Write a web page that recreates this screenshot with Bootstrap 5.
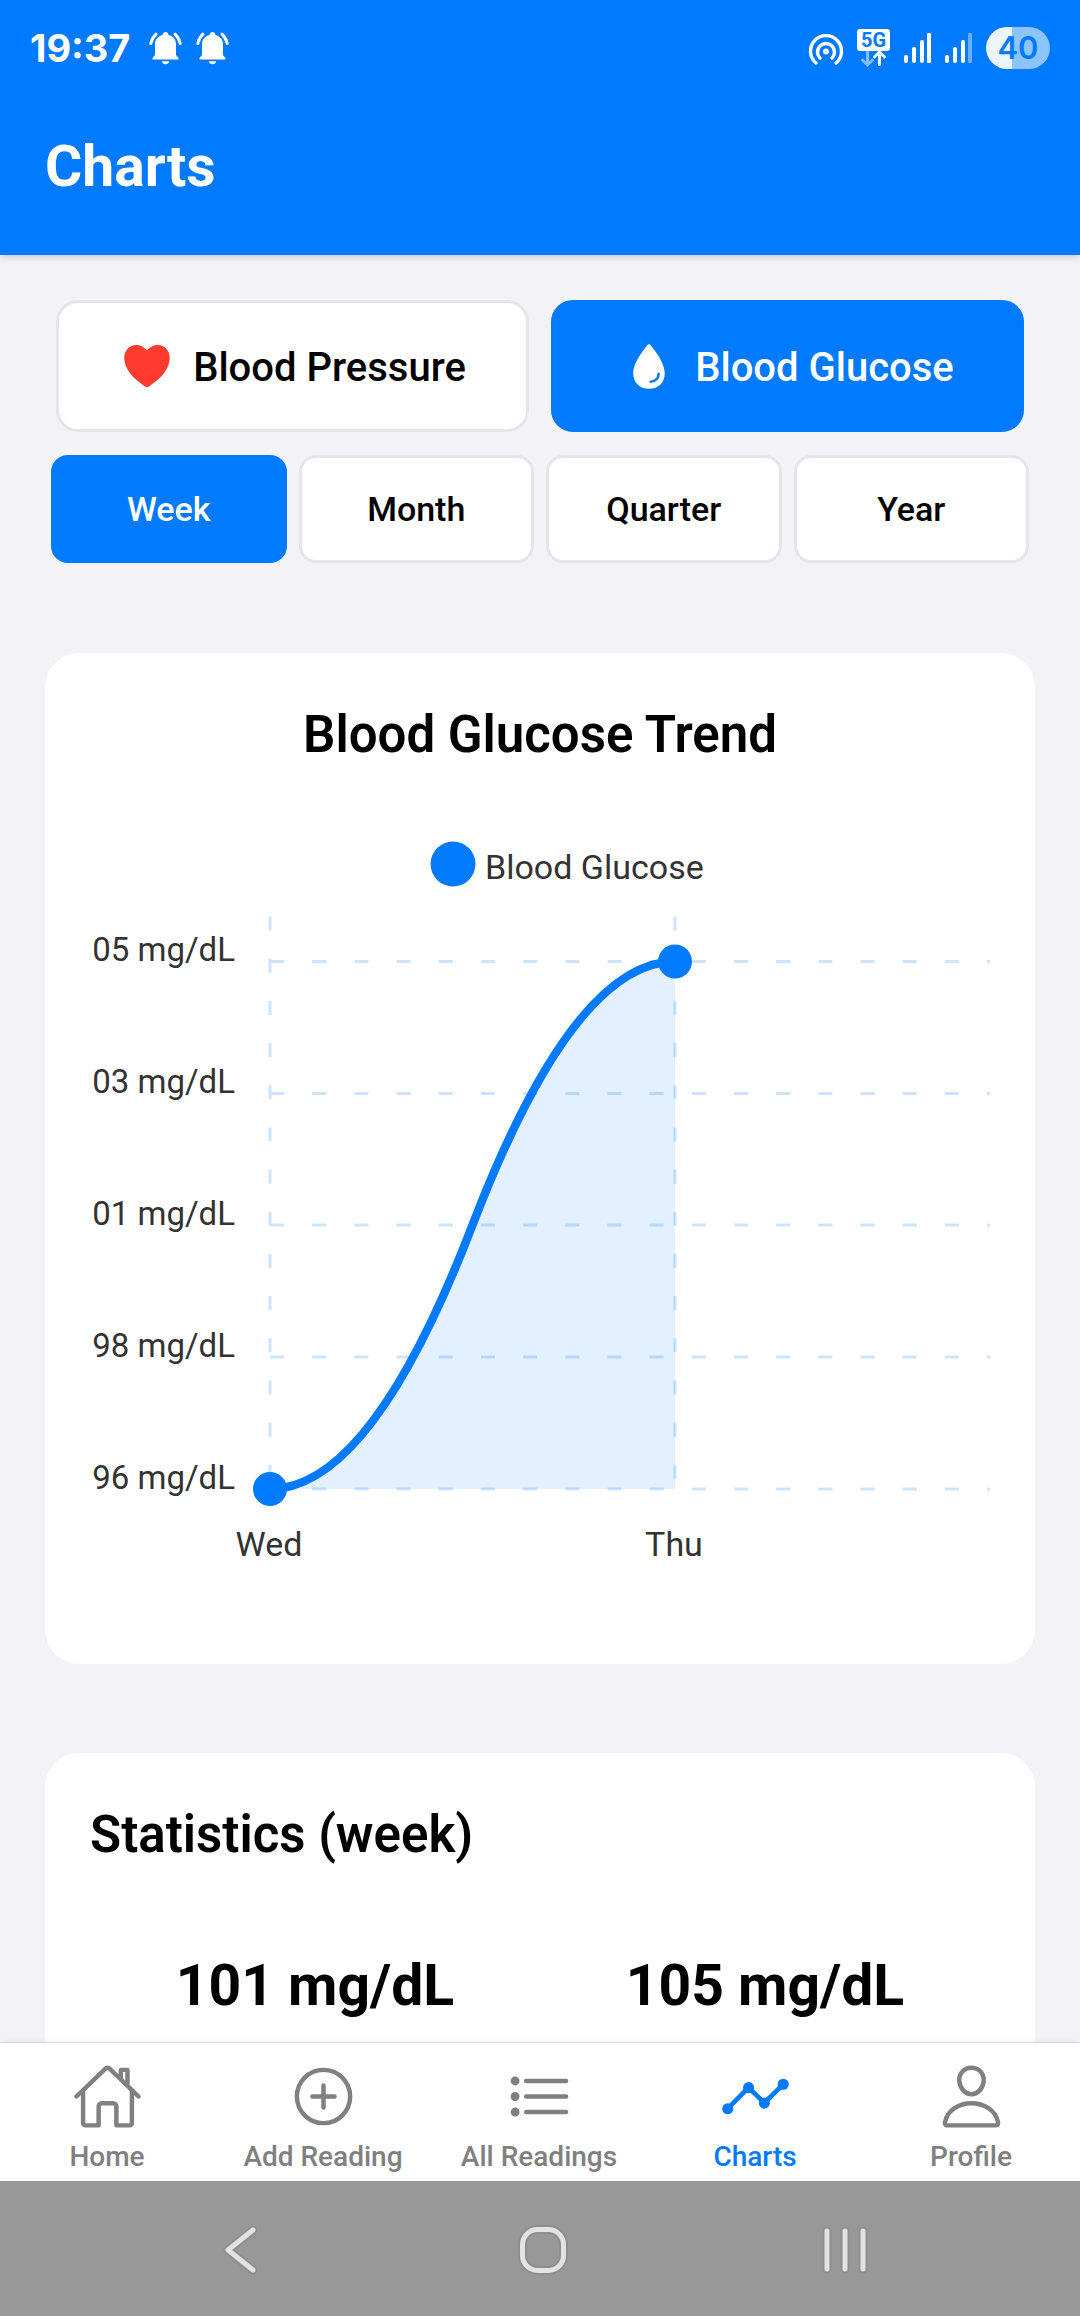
<!DOCTYPE html>
<html lang="en">
<head>
<meta charset="utf-8">
<meta name="viewport" content="width=device-width, initial-scale=1">
<title>Charts</title>
<link href="https://cdn.jsdelivr.net/npm/bootstrap@5.3.0/dist/css/bootstrap.min.css" rel="stylesheet">
<style>
  :root { --app-blue: #007aff; --app-line: #e5e5ea; --app-gray: #808080; }
  body { font-family: Roboto, "Noto Sans", sans-serif; background: #f2f2f7; color: #000; }
  svg { display: block; flex: none; }
  .app-header { background: var(--app-blue); color: #fff; box-shadow: 0 1px 8px rgba(0,0,0,.2); z-index: 1; }
  .status-row { height: 96px; padding: 0 30px; }
  .status-clock { font: 700 38px/48px Inter, sans-serif; margin-right: 19px; }
  .status-bells { gap: 14px; }
  .status-icons { gap: 13px; }
  .battery-pill { width: 64px; height: 42px; border-radius: 21px; color: var(--app-blue);
    background: linear-gradient(90deg, #ebf5ff 40%, #8cc4ff 40%); font: 600 31px/42px Inter, sans-serif; }
  .app-title { font-size: 57px; line-height: 66px; font-weight: 700; padding: 38px 45px 55px; margin: 0; }
  .type-row { padding: 45px 56px 0; gap: 22px; }
  .period-row { padding: 23px 51px 0; gap: 12px; }
  .pick { background: #fff; border: 3px solid var(--app-line); color: #000; font-weight: 500; padding: 0; }
  .pick.active { background: var(--app-blue) !important; border-color: var(--app-blue) !important; color: #fff !important; }
  .type-row .pick { height: 132px; border-radius: 22px; font-size: 40px; line-height: 48px; gap: 18px; }
  .type-row .pick span { padding-top: 4px; }
  .period-row .pick { height: 108px; border-radius: 17px; font-size: 34px; line-height: 42px; }
  .panel { background: #fff; border: 0; border-radius: 34px; padding: 46px 45px 45px; }
  .panel-title { font-size: 51px; line-height: 72px; font-weight: 600; margin: 0; }
  .panels { padding: 90px 45px 0; gap: 89px; }
  .stat-row { padding-top: 82px; }
  .stat-value { font-size: 57px; line-height: 66px; font-weight: 700; }
  .tab-bar { background: #fff; border-top: 1px solid #d8d8dc; box-shadow: 0 -1px 6px rgba(0,0,0,.06); z-index: 1; }
  .tab-link { flex: 1 1 0; padding: 18px 2px 6px 0; gap: 7px; color: var(--app-gray); font-size: 28px; line-height: 36px; font-weight: 500; text-decoration: none; white-space: nowrap; }
  .tab-link.active { color: var(--app-blue); }
  .line-icon { fill: none; stroke: currentColor; stroke-width: 32; stroke-linecap: round; stroke-linejoin: round; }
  .system-bar { background: #989898; height: 135px; padding: 3px 84px 0 90px; }
  .system-bar button { flex: 1 1 0; background: none; border: 0; padding: 0; }
  .trend-chart { overflow: visible; }
  .axis-text { font-size: 34px; fill: #333; }
  .scale-text { font-size: 33px; }
  .grid-line { stroke: #007aff; stroke-opacity: .2; stroke-width: 3; stroke-dasharray: 14.06 28.12; fill: none; }
</style>
</head>
<body>
<div class="min-vh-100 d-flex flex-column">
  <header class="app-header position-relative">
    <div class="status-row d-flex align-items-center justify-content-between">
      <div class="d-flex align-items-center">
        <span class="status-clock">19:37</span>
        <div class="status-bells d-flex">
          <svg width="33" height="33" viewBox="0 0 33 33" fill="#fff" aria-hidden="true"><path d="M16.500 0c1.700 0 2.700 1.100 3 3 4.500 1.300 7.500 4.700 7.500 9v11l2.500 3c.4.800 0 1.500-1 1.500h-24c-1 0-1.400-.7-1-1.500L6 23V12c0-4.300 3-7.700 7.500-9 .3-1.900 1.300-3 3-3zM13 29.200h7c0 1.800-1.500 3-3.500 3s-3.500-1.200-3.500-3z"/><path d="M7 2.200Q3 6 1.800 11.500M26 2.200Q30 6 31.200 11.500" fill="none" stroke="#fff" stroke-width="3" stroke-linecap="round"/></svg>
          <svg width="33" height="33" viewBox="0 0 33 33" fill="#fff" aria-hidden="true"><path d="M16.500 0c1.700 0 2.700 1.100 3 3 4.500 1.300 7.500 4.700 7.500 9v11l2.500 3c.4.800 0 1.500-1 1.500h-24c-1 0-1.400-.7-1-1.500L6 23V12c0-4.300 3-7.700 7.500-9 .3-1.900 1.300-3 3-3zM13 29.200h7c0 1.800-1.500 3-3.500 3s-3.500-1.200-3.500-3z"/><path d="M7 2.200Q3 6 1.800 11.500M26 2.200Q30 6 31.200 11.500" fill="none" stroke="#fff" stroke-width="3" stroke-linecap="round"/></svg>
        </div>
      </div>
      <div class="status-icons d-flex align-items-center">
        <svg width="36" height="40" viewBox="0 0 36 40" fill="none" stroke="#fff" stroke-width="3.400" stroke-linecap="round" aria-hidden="true"><path d="M8 35A15.500 15.500 0 1 1 28 35"/><path d="M12 30A8.500 8.500 0 1 1 24 30"/><circle cx="18" cy="23.500" r="3" fill="#fff" stroke="none"/></svg>
        <svg width="34" height="40" viewBox="0 0 34 40" aria-hidden="true"><rect width="33" height="22" rx="3" y="1" fill="#fff"/><text x="16.500" y="18.500" text-anchor="middle" font-family="Roboto" font-weight="700" font-size="20" fill="#007aff">5G</text><g fill="none" stroke="#fff" stroke-width="3" stroke-linecap="round"><path opacity=".5" d="M10.500 24v12M5.500 32l5 5 5-5"/><path d="M22.500 36.500V25M17.500 29l5-5 5 5"/></g></svg>
        <svg width="28" height="30" viewBox="0 0 28 30" fill="#fff" aria-hidden="true"><rect x="0" y="22" width="4" height="8" rx="2"/><rect x="8" y="14" width="4" height="16" rx="2"/><rect x="16" y="7" width="4" height="23" rx="2"/><rect x="23" y="0" width="4" height="30" rx="1"/></svg>
        <svg width="28" height="30" viewBox="0 0 28 30" fill="#fff" aria-hidden="true"><rect x="0" y="22" width="4" height="8" rx="2"/><rect x="8" y="14" width="4" height="16" rx="2"/><rect x="16" y="7" width="4" height="23" rx="2"/><rect x="23" y="0" width="4" height="30" rx="1" opacity=".4"/></svg>
        <span class="battery-pill text-center">40</span>
      </div>
    </div>
    <h1 class="app-title">Charts</h1>
  </header>

  <main class="flex-grow-1 d-flex flex-column">
    <div class="type-row d-flex">
      <button type="button" class="btn pick flex-fill w-50 d-flex align-items-center justify-content-center">
        <svg width="56" height="56" viewBox="0 0 512 512" fill="#ff3b30" aria-hidden="true"><path d="M256 448a32 32 0 01-18-5.570c-78.590-53.350-112.620-89.930-131.390-112.800-40-48.750-59.150-98.800-58.610-153C48.630 114.520 98.460 64 159.080 64c44.080 0 74.610 24.830 92.390 45.510a6 6 0 009.060 0C278.310 88.810 308.840 64 352.920 64c60.620 0 110.450 50.520 111.080 112.640.540 54.210-18.630 104.260-58.610 153-18.770 22.870-52.800 59.450-131.390 112.800a32 32 0 01-18 5.560z"/></svg>
        <span>Blood Pressure</span>
      </button>
      <button type="button" class="btn pick active flex-fill w-50 d-flex align-items-center justify-content-center" aria-pressed="true">
        <svg width="56" height="56" viewBox="0 0 512 512" fill="#fff" aria-hidden="true"><path d="M265.120 60.120a12 12 0 00-18.230 0C215.230 97.150 112 225.170 112 320c0 88.370 55.640 144 144 144s144-55.630 144-144c0-94.830-103.230-222.850-134.880-259.880zM272 412a12 12 0 01-11.340-16 11.890 11.890 0 0111.410-8A60.060 60.060 0 00332 328.070a11.890 11.890 0 018-11.410A12 12 0 01356 328a84.090 84.090 0 01-84 84z"/></svg>
        <span>Blood Glucose</span>
      </button>
    </div>
    <div class="period-row d-flex">
      <button type="button" class="btn pick active w-25" aria-pressed="true">Week</button>
      <button type="button" class="btn pick w-25">Month</button>
      <button type="button" class="btn pick w-25">Quarter</button>
      <button type="button" class="btn pick w-25">Year</button>
    </div>

    <div class="panels d-flex flex-column flex-grow-1">
      <section class="card panel">
        <h2 class="panel-title text-center">Blood Glucose Trend</h2>
        <svg class="trend-chart w-100 h-auto" viewBox="0 0 900 848" role="img" aria-label="Blood glucose by day">
          <circle cx="363" cy="93" r="22.500" fill="#007aff"/>
          <text class="axis-text" x="395" y="108">Blood Glucose</text>
          <g class="axis-text scale-text" text-anchor="end">
            <text x="145" y="190">05 mg/dL</text>
            <text x="145" y="322">03 mg/dL</text>
            <text x="145" y="454">01 mg/dL</text>
            <text x="145" y="586">98 mg/dL</text>
            <text x="145" y="718">96 mg/dL</text>
          </g>
          <path class="grid-line" d="M180 190.500H900M180 322.500H900M180 454H900M180 586H900M180 718H900M180 145.500V718M585 145.500V718"/>
          <path fill="#007aff" fill-opacity=".11" d="M180 718Q281.250 718 382.500 454Q483.750 190.500 585 190.500V718Z"/>
          <path fill="none" stroke="#007aff" stroke-width="8.400" d="M180 718Q281.250 718 382.500 454Q483.750 190.500 585 190.500"/>
          <circle cx="180" cy="718" r="17" fill="#007aff"/>
          <circle cx="585" cy="190.500" r="17" fill="#007aff"/>
          <g class="axis-text" text-anchor="middle">
            <text x="179" y="785">Wed</text>
            <text x="584" y="785">Thu</text>
          </g>
        </svg>
      </section>

      <section class="card panel rounded-bottom-0 flex-grow-1 pb-0">
        <h2 class="panel-title">Statistics (week)</h2>
        <div class="stat-row row g-0 text-center">
          <div class="col-6 stat-value">101 mg/dL</div>
          <div class="col-6 stat-value">105 mg/dL</div>
        </div>
      </section>
    </div>
  </main>

  <nav class="tab-bar d-flex position-relative" aria-label="Main">
    <a href="#" class="tab-link d-flex flex-column align-items-center">
      <svg class="line-icon" width="71" height="71" viewBox="0 0 512 512" aria-hidden="true"><path d="M80 212v236a16 16 0 0016 16h96V328a24 24 0 0124-24h80a24 24 0 0124 24v136h96a16 16 0 0016-16V212"/><path d="M480 256L266.890 52c-5-5.280-16.690-5.340-21.780 0L32 256M400 179V64h-48v69"/></svg>
      <span>Home</span>
    </a>
    <a href="#" class="tab-link d-flex flex-column align-items-center">
      <svg class="line-icon" width="71" height="71" viewBox="0 0 512 512" aria-hidden="true"><circle cx="256" cy="256" r="192"/><path d="M256 176v160M336 256H176"/></svg>
      <span>Add Reading</span>
    </a>
    <a href="#" class="tab-link d-flex flex-column align-items-center">
      <svg class="line-icon" width="71" height="71" viewBox="0 0 512 512" aria-hidden="true"><path d="M160 144h288M160 256h288M160 368h288"/><circle cx="80" cy="144" r="16"/><circle cx="80" cy="256" r="16"/><circle cx="80" cy="368" r="16"/></svg>
      <span>All Readings</span>
    </a>
    <a href="#" class="tab-link active d-flex flex-column align-items-center" aria-current="page">
      <svg width="71" height="71" viewBox="0 0 512 512" fill="currentColor" aria-hidden="true"><path d="M56 344L206 192L320 302L456 168" fill="none" stroke="currentColor" stroke-width="34"/><circle cx="56" cy="344" r="40"/><circle cx="206" cy="192" r="40"/><circle cx="320" cy="304" r="40"/><circle cx="456" cy="168" r="40"/></svg>
      <span>Charts</span>
    </a>
    <a href="#" class="tab-link d-flex flex-column align-items-center">
      <svg class="line-icon" width="71" height="71" viewBox="0 0 512 512" aria-hidden="true"><path d="M344 144c-3.920 52.870-44 96-88 96s-84.150-43.120-88-96c-4-55 35-96 88-96s92 42 88 96z"/><path d="M256 304c-87 0-175.300 48-191.640 138.600C62.390 453.520 68.570 464 80 464h352c11.440 0 17.620-10.480 15.650-21.400C431.300 352 343 304 256 304z"/></svg>
      <span>Profile</span>
    </a>
  </nav>

  <div class="system-bar d-flex align-items-center">
    <button type="button" class="d-flex justify-content-center" aria-label="Back"><svg width="52" height="52" viewBox="0 0 52 52" fill="none" stroke-linecap="round" stroke-linejoin="round"><path d="M38 6L13 26L38 46" stroke="#8e8e8e" stroke-width="9"/><path d="M38 6L13 26L38 46" stroke="#e2e2e2" stroke-width="5"/></svg></button>
    <button type="button" class="d-flex justify-content-center" aria-label="Home"><svg width="52" height="52" viewBox="0 0 52 52" fill="none"><rect x="5.500" y="5.500" width="41" height="41" rx="15" stroke="#8e8e8e" stroke-width="9"/><rect x="5.500" y="5.500" width="41" height="41" rx="15" stroke="#e2e2e2" stroke-width="5"/></svg></button>
    <button type="button" class="d-flex justify-content-center" aria-label="Recent apps"><svg width="52" height="52" viewBox="0 0 52 52" fill="none" stroke-linecap="round"><path d="M8 7V45M26 7V45M44 7V45" stroke="#8e8e8e" stroke-width="9"/><path d="M8 7V45M26 7V45M44 7V45" stroke="#e2e2e2" stroke-width="5"/></svg></button>
  </div>
</div>
<script src="https://cdn.jsdelivr.net/npm/bootstrap@5.3.0/dist/js/bootstrap.bundle.min.js"></script>
</body>
</html>
